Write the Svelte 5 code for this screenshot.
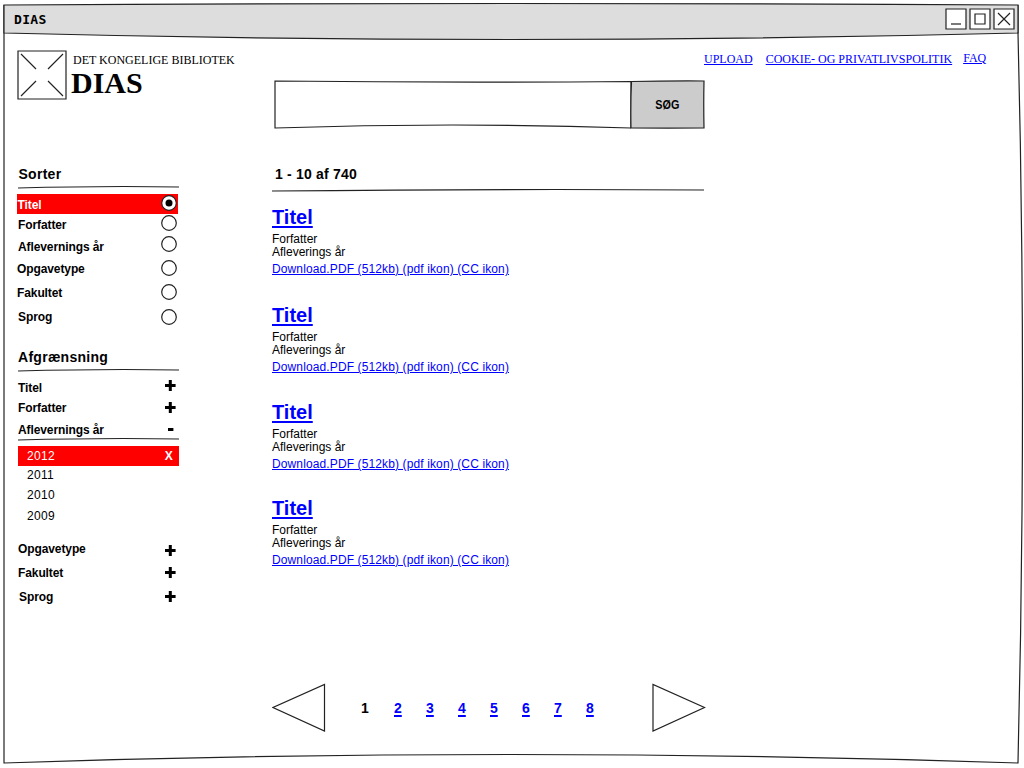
<script>
  const sortOptions = [
    { label: 'Titel', height: 20, inset: 0.5, nudge: -1, selected: true },
    { label: 'Forfatter', height: 22, inset: 1, nudge: -1 },
    { label: 'Aflevernings år', height: 22, inset: 1, nudge: -2 },
    { label: 'Opgavetype', height: 24, inset: 0, nudge: 0 },
    { label: 'Fakultet', height: 24, inset: 0, nudge: 0 },
    { label: 'Sprog', height: 20, inset: 1, nudge: 1 }
  ];
  const openFilters = [
    { label: 'Titel', height: 20, sign: '+', nudge: -1 },
    { label: 'Forfatter', height: 22, sign: '+', nudge: 1 },
    { label: 'Aflevernings år', height: 17, sign: '-', nudge: 1 }
  ];
  const years = [
    { label: '2011', height: 20 },
    { label: '2010', height: 21 },
    { label: '2009', height: 20 }
  ];
  const closedFilters = [
    { label: 'Opgavetype', height: 24, inset: 0, nudge: 3 },
    { label: 'Fakultet', height: 24, inset: 0, nudge: 1 },
    { label: 'Sprog', height: 24, inset: 1, nudge: 1 }
  ];
  const results = [98, 97, 96, 96];
  const pages = [2, 3, 4, 5, 6, 7, 8];
</script>

{#snippet sign(kind)}
  <svg class="sign" width="11" height="11" viewBox="0 0 11 11">
    {#if kind === '+'}
      <path d="M0 5.5H10.6M5.3 0V11" />
    {:else}
      <path d="M3 5.5H8.4" />
    {/if}
  </svg>
{/snippet}

{#snippet rule(width)}
  <svg class="rule" {width} height="4" viewBox="0 0 {width} 4">
    <path d="M0 3 Q{width * 0.55} 0.6 {width} 2" />
  </svg>
{/snippet}

<div class="window">
  <svg class="frame" width="1024" height="768" viewBox="0 0 1024 768">
    <path d="M4 5V763Q510 746 1018 763Q1027 390 1018 33V5" />
    <path class="bar" d="M4 5Q510 2 1018 5L1018 33Q510 46 4 33Z" />
  </svg>

  <header class="titlebar">
    <span class="caption">DIAS</span>
    <div class="controls">
      <svg width="22" height="22" viewBox="0 0 22 22"><path class="box" d="M1 1H21V21H1Z" /><path d="M6 16H16" /></svg>
      <svg width="22" height="22" viewBox="0 0 22 22"><path class="box" d="M1 1H21V21H1Z" /><path d="M6 6H16V16H6Z" /></svg>
      <svg width="22" height="22" viewBox="0 0 22 22"><path class="box" d="M1 1H21V21H1Z" /><path d="M5 5L17 17M17 5L5 17" /></svg>
    </div>
  </header>

  <div class="top">
    <div class="brand">
      <svg width="50" height="50" viewBox="0 0 50 50">
        <path d="M1 1H49V49H1Z" />
        <path d="M4 4L19 19M46 4L31 19M4 46L19 31M46 46L31 31" />
      </svg>
      <div class="names">
        <div class="org">DET KONGELIGE BIBLIOTEK</div>
        <div class="product">DIAS</div>
      </div>
    </div>
    <div class="search">
      <svg class="field" width="357" height="50" viewBox="0 0 357 50">
        <path d="M1 1Q178 3 357 1.5V48Q178 42 1 48Z" />
      </svg>
      <button>
        <svg width="75" height="50" viewBox="0 0 75 50"><path d="M1.5 1.5Q38 0.8 74 1Q73.5 24 74 48Q38 48.2 1 48Q0.5 24 1.5 1.5Z" /></svg>
        <span>SØG</span>
      </button>
    </div>
    <nav>
      <a href="#upload">UPLOAD</a>
      <a href="#cookies">COOKIE- OG PRIVATLIVSPOLITIK</a>
      <a class="faq" href="#faq">FAQ</a>
    </nav>
  </div>

  <div class="content">
    <aside>
      <h2>Sorter</h2>
      {@render rule(161)}
      <div class="sort">
        {#each sortOptions as o}
          <div class="option" class:selected={o.selected} style="height:{o.height}px;padding-left:{o.inset}px">
            <span>{o.label}</span>
            <svg class="radio" width="18" height="18" viewBox="0 0 18 18" style="margin-top:{1 + o.nudge}px">
              <circle cx="9" cy="9" r="7.3" />
              {#if o.selected}<circle class="dot" cx="9" cy="9" r="3.5" />{/if}
            </svg>
          </div>
        {/each}
      </div>

      <h2 class="filter-title">Afgrænsning</h2>
      {@render rule(161)}
      <div class="filters">
        {#each openFilters as f}
          <div class="filter" style="height:{f.height}px">
            <span>{f.label}</span>
            <i style="margin-top:{3 + f.nudge}px">{@render sign(f.sign)}</i>
          </div>
        {/each}
      </div>
      {@render rule(161)}
      <div class="year active"><span>2012</span><b>X</b></div>
      {#each years as y}
        <div class="year" style="height:{y.height}px">{y.label}</div>
      {/each}
      <div class="closed">
        {#each closedFilters as f}
          <div class="filter" style="height:{f.height}px;padding-left:{f.inset}px">
            <span>{f.label}</span>
            <i style="margin-top:{3 + f.nudge}px">{@render sign('+')}</i>
          </div>
        {/each}
      </div>
    </aside>

    <main>
      <h2 class="count">1 - 10 af 740</h2>
      {@render rule(432)}
      <div class="results">
        {#each results as height}
          <article style="height:{height}px">
            <h3><a href="#titel">Titel</a></h3>
            <p>Forfatter</p>
            <p>Afleverings år</p>
            <a class="download" href="#pdf">Download.PDF (512kb) (pdf ikon) (CC ikon)</a>
          </article>
        {/each}
      </div>
      <div class="pager">
        <svg width="54" height="50" viewBox="0 0 54 50"><path d="M52.5 1.5V48L1 24.5Z" /></svg>
        <div class="pages">
          <span>1</span>
          {#each pages as p}<a href="#side{p}">{p}</a>{/each}
        </div>
        <svg width="54" height="50" viewBox="0 0 54 50"><path d="M1 1.5V48L52.5 24.5Z" /></svg>
      </div>
    </main>
  </div>
</div>

<style>
  :global(body) { background: #fff; overflow: hidden; }
  .window {
    position: relative;
    width: 1024px;
    height: 768px;
    overflow: hidden;
    box-sizing: border-box;
    font: 12px/20px "Liberation Sans", Arial, sans-serif;
    color: #000;
  }
  svg { display: block; flex: none; fill: #fff; stroke: #222; stroke-width: 1.2; }
  .frame { position: absolute; left: 0; top: 0; }
  .bar { fill: #ddd; }
  a { color: #00f; }
  h2, h3, p { margin: 0; }
  .titlebar {
    position: relative;
    display: flex;
    justify-content: space-between;
    height: 40px;
    padding: 8px 9px 0 14px;
    box-sizing: border-box;
  }
  .caption {
    font: bold 13px/24px "Comic Sans MS", "DejaVu Sans Mono", monospace;
    letter-spacing: 0.3px;
  }
  .controls { display: flex; gap: 2px; }
  .top { position: relative; display: flex; height: 100px; }
  .brand { display: flex; width: 257px; padding: 10px 0 0 17px; gap: 4px; }
  .names { font-family: "Liberation Serif", "Times New Roman", serif; white-space: nowrap; }
  .org { padding-left: 2px; line-height: 20px; }
  .product { font-weight: bold; font-size: 30px; line-height: 26px; }
  .search { display: flex; padding-top: 40px; width: 430px; }
  .field { margin-right: -1px; }
  button {
    display: grid;
    place-items: center;
    width: 75px;
    height: 50px;
    padding: 0;
    border: 0;
    background: none;
    color: #000;
    font: bold 12px "Liberation Sans", Arial, sans-serif;
  }
  button > * { grid-area: 1 / 1; }
  button span { z-index: 1; transform: scaleX(0.9); }
  button svg { fill: #ccc; }
  nav {
    display: flex;
    gap: 13px;
    padding-top: 9px;
    font-family: "Liberation Serif", "Times New Roman", serif;
    white-space: nowrap;
  }
  .faq { margin: -1px 0 0 -2px; }
  .content { position: relative; display: flex; padding: 24px 0 0 17px; }
  aside { width: 162px; margin-right: 93px; }
  h2 { font-size: 14px; line-height: 20px; letter-spacing: 0.28px; padding-left: 1.5px; }
  .filter-title { padding-left: 1px; }
  .rule { fill: none; margin: 1px 0 0 1px; }
  .sort { padding-top: 5px; width: 161px; font-weight: bold; letter-spacing: -0.1px; }
  .option, .filter { display: flex; justify-content: space-between; align-items: flex-start; box-sizing: border-box; }
  .option span { margin-top: 1px; }
  .selected { background: red; color: #fff; }
  .option .dot { fill: #000; stroke: none; }
  .filter-title { margin-top: 21px; }
  .filters { padding: 6px 0 0 1px; font-weight: bold; letter-spacing: -0.1px; }
  .filters + :global(.rule) { margin-top: 0; }
  .closed { padding: 13px 0 0 1px; font-weight: bold; letter-spacing: -0.1px; }
  i { margin-right: 3px; }
  .sign { fill: none; stroke: #000; stroke-width: 3; }
  .year { margin-left: 1px; padding-left: 9px; letter-spacing: 0.3px; }
  .active {
    display: flex;
    justify-content: space-between;
    height: 20px;
    margin-top: 5px;
    margin-bottom: -1px;
    padding-right: 6px;
    background: red;
    color: #fff;
  }
  main { width: 434px; }
  .count { padding-left: 3px; letter-spacing: 0.2px; }
  main > :global(.rule) { margin: 4px 0 0; }
  .results { height: 391px; padding-top: 12px; }
  h3 { font-size: 20px; line-height: 26px; margin-bottom: 3px; }
  h3 a { text-decoration-thickness: 2px; text-underline-offset: 2px; }
  p { line-height: 13px; }
  .download { display: block; letter-spacing: 0.12px; line-height: 20px; white-space: nowrap; }
  .pager { display: flex; justify-content: space-between; padding-top: 88px; }
  .pages { display: flex; flex: 1; gap: 24px; padding: 15px 0 0 35px; font-size: 14px; font-weight: bold; }
  .pages > * { width: 8px; }
  .pages a { position: relative; left: 1px; text-decoration-thickness: 2px; text-underline-offset: 2px; }
</style>
